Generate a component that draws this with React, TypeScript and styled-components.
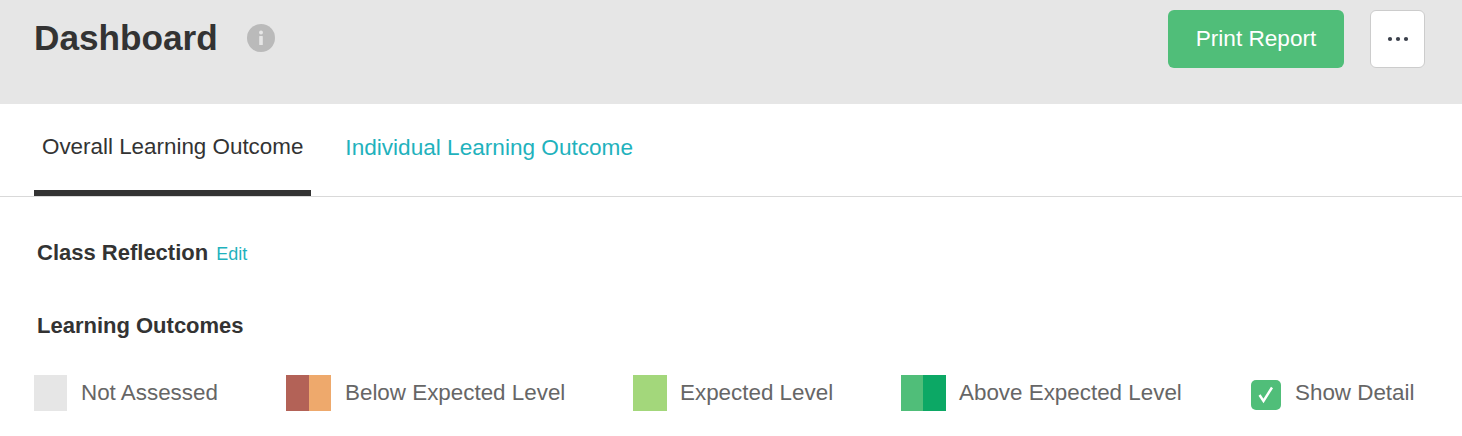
import React from "react";
import styled, { createGlobalStyle } from "styled-components";

const Global = createGlobalStyle`
  html, body { margin: 0; padding: 0; background: #fff; }
  body { font-family: "Liberation Sans", Arial, sans-serif; color: #333; }
`;

const Page = styled.div`
  width: 1462px;
  height: 436px;
  overflow: hidden;
`;

const Header = styled.header`
  height: 104px;
  box-sizing: border-box;
  background: #e6e6e6;
  padding: 10px 37px 0 34px;
  display: flex;
  justify-content: space-between;
  align-items: flex-start;
`;

const TitleGroup = styled.div`
  display: flex;
  align-items: center;
  gap: 29px;
  height: 56px;
`;

const Title = styled.h1`
  margin: 0;
  font-size: 35.2px;
  line-height: 56px;
  font-weight: 700;
  color: #333;
`;

const InfoBadge = styled.span`
  display: block;
  width: 28px;
  height: 28px;
  svg { display: block; }
`;

const Actions = styled.div`
  display: flex;
  gap: 26px;
  align-items: flex-start;
`;

const PrintButton = styled.button`
  width: 176px;
  height: 58px;
  border: 0;
  border-radius: 6px;
  background: #50be79;
  color: #fff;
  font: 400 22.6px "Liberation Sans", Arial, sans-serif;
  padding: 0;
`;

const MoreButton = styled.button`
  width: 55px;
  height: 58px;
  border: 1px solid #ccc;
  border-radius: 6px;
  background: #fff;
  padding: 0;
  display: flex;
  align-items: center;
  justify-content: center;
  svg { display: block; }
`;

const Tabs = styled.nav`
  height: 93px;
  box-sizing: border-box;
  border-bottom: 1px solid #d9d9d9;
  padding-left: 34px;
  display: flex;
  gap: 26px;
`;

const Tab = styled.div<{ $active?: boolean }>`
  height: 92px;
  box-sizing: border-box;
  padding: ${(p) => (p.$active ? "28px 8px 0" : "29px 8px 0")};
  font-size: ${(p) => (p.$active ? "22.4px" : "22.6px")};
  line-height: 30px;
  white-space: nowrap;
  color: ${(p) => (p.$active ? "#333" : "#1fb2bd")};
  border-bottom: ${(p) => (p.$active ? "6px solid #333" : "0")};
`;

const Section = styled.section`
  padding: 0 0 0 37px;
`;

const ReflectionRow = styled(Section)`
  display: flex;
  align-items: baseline;
  gap: 8px;
  padding-top: 41px;
  height: 30px;
`;

const Heading = styled.h2`
  margin: 0;
  font-size: 22px;
  line-height: 30px;
  font-weight: 700;
  color: #333;
`;

const EditLink = styled.a`
  font-size: 18px;
  color: #1fb2bd;
`;

const OutcomesHeading = styled(Section)`
  padding-top: 43px;
`;

const Legend = styled.div`
  display: flex;
  align-items: center;
  padding-left: 34px;
  margin-top: 34px;
  height: 36px;
`;

const LegendItem = styled.div<{ $width: number }>`
  display: flex;
  align-items: center;
  width: ${(p) => p.$width}px;
  flex: none;
`;

const Swatch = styled.div<{ $width: number; $gap?: number }>`
  display: flex;
  width: ${(p) => p.$width}px;
  height: 36px;
  margin-right: ${(p) => p.$gap ?? 14}px;
  flex: none;
`;

const SwatchPart = styled.span<{ $color: string; $grow?: number }>`
  flex: ${(p) => p.$grow ?? 1};
  background: ${(p) => p.$color};
`;

const Label = styled.span`
  font-size: 22.4px;
  line-height: 30px;
  color: #666;
  white-space: nowrap;
`;

const CheckBox = styled.span`
  width: 30px;
  height: 30px;
  margin-top: 3px;
  margin-right: 14px;
  border-radius: 5px;
  background: #50be79;
  flex: none;
  display: flex;
  align-items: center;
  justify-content: center;
  svg { display: block; }
`;

export default function App() {
  return (
    <Page>
      <Global />
      <Header>
        <TitleGroup>
          <Title>Dashboard</Title>
          <InfoBadge>
            <svg width="28" height="28" viewBox="0 0 28 28">
              <circle cx="14" cy="14" r="14" fill="#bababa" />
              <circle cx="14" cy="8.5" r="2" fill="#e6e6e6" />
              <rect x="12.2" y="12" width="3.6" height="9" rx="0.6" fill="#e6e6e6" />
            </svg>
          </InfoBadge>
        </TitleGroup>
        <Actions>
          <PrintButton>Print Report</PrintButton>
          <MoreButton aria-label="More">
            <svg width="22" height="6" viewBox="0 0 22 6">
              <circle cx="3" cy="3" r="2.1" fill="#3a3f4a" />
              <circle cx="11" cy="3" r="2.1" fill="#3a3f4a" />
              <circle cx="19" cy="3" r="2.1" fill="#3a3f4a" />
            </svg>
          </MoreButton>
        </Actions>
      </Header>
      <Tabs>
        <Tab $active>Overall Learning Outcome</Tab>
        <Tab>Individual Learning Outcome</Tab>
      </Tabs>
      <ReflectionRow>
        <Heading>Class Reflection</Heading>
        <EditLink>Edit</EditLink>
      </ReflectionRow>
      <OutcomesHeading>
        <Heading>Learning Outcomes</Heading>
      </OutcomesHeading>
      <Legend>
        <LegendItem $width={252}>
          <Swatch $width={33}><SwatchPart $color="#e6e6e6" /></Swatch>
          <Label>Not Assessed</Label>
        </LegendItem>
        <LegendItem $width={347}>
          <Swatch $width={45}>
            <SwatchPart $color="#b36257" $grow={23} />
            <SwatchPart $color="#eea96c" $grow={22} />
          </Swatch>
          <Label>Below Expected Level</Label>
        </LegendItem>
        <LegendItem $width={268}>
          <Swatch $width={34} $gap={13}><SwatchPart $color="#a3d77b" /></Swatch>
          <Label>Expected Level</Label>
        </LegendItem>
        <LegendItem $width={350}>
          <Swatch $width={45} $gap={13}>
            <SwatchPart $color="#50be79" $grow={22} />
            <SwatchPart $color="#0ca865" $grow={23} />
          </Swatch>
          <Label>Above Expected Level</Label>
        </LegendItem>
        <LegendItem $width={180}>
          <CheckBox>
            <svg width="18" height="18" viewBox="0 0 18 18">
              <path d="M2.5 9 L6.5 15 L15 1.5" fill="none" stroke="#fff" strokeWidth="2.4" />
            </svg>
          </CheckBox>
          <Label>Show Detail</Label>
        </LegendItem>
      </Legend>
    </Page>
  );
}
